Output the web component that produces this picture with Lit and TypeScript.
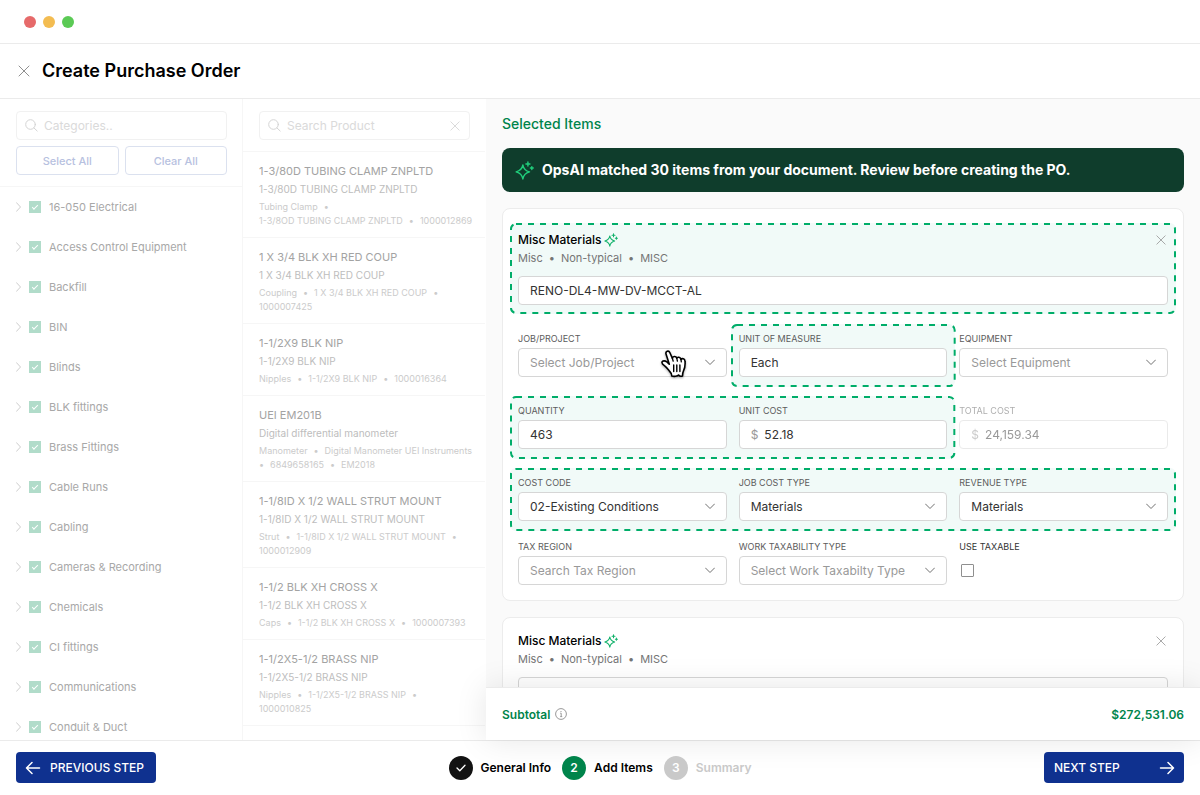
import { LitElement, html, css, nothing } from "lit";
import { customElement, property } from "lit/decorators.js";

const CATEGORIES = [
  "16-050 Electrical", "Access Control Equipment", "Backfill", "BIN", "Blinds", "BLK fittings",
  "Brass Fittings", "Cable Runs", "Cabling", "Cameras & Recording", "Chemicals", "CI fittings",
  "Communications", "Conduit & Duct",
];

interface Product { name: string; desc: string; lines: string[][]; }

const PRODUCTS: Product[] = [
  { name: "1-3/80D TUBING CLAMP ZNPLTD", desc: "1-3/80D TUBING CLAMP ZNPLTD", lines: [["Tubing Clamp", ""], ["1-3/8OD TUBING CLAMP ZNPLTD", "1000012869"]] },
  { name: "1 X 3/4 BLK XH RED COUP", desc: "1 X 3/4 BLK XH RED COUP", lines: [["Coupling", "1 X 3/4 BLK XH RED COUP", ""], ["1000007425"]] },
  { name: "1-1/2X9 BLK NIP", desc: "1-1/2X9 BLK NIP", lines: [["Nipples", "1-1/2X9 BLK NIP", "1000016364"]] },
  { name: "UEI EM201B", desc: "Digital differential manometer", lines: [["Manometer", "Digital Manometer UEI Instruments"], ["", "6849658165", "EM2018"]] },
  { name: "1-1/8ID X 1/2 WALL STRUT MOUNT", desc: "1-1/8ID X 1/2 WALL STRUT MOUNT", lines: [["Strut", "1-1/8ID X 1/2 WALL STRUT MOUNT", ""], ["1000012909"]] },
  { name: "1-1/2 BLK XH CROSS X", desc: "1-1/2 BLK XH CROSS X", lines: [["Caps", "1-1/2 BLK XH CROSS X", "1000007393"]] },
  { name: "1-1/2X5-1/2 BRASS NIP", desc: "1-1/2X5-1/2 BRASS NIP", lines: [["Nipples", "1-1/2X5-1/2 BRASS NIP", ""], ["1000010825"]] },
];

const base = css`
  *, *::before, *::after { box-sizing: border-box; }
  button, input, select { font: inherit; color: inherit; margin: 0; }
  button { cursor: pointer; }
  h1, h2, h3, p, ul { margin: 0; padding: 0; font-weight: inherit; font-size: inherit; }
  ul { list-style: none; }
  svg { display: block; flex: none; }
  .iconbtn { border: 0; background: none; padding: 0; display: block; }
`;

const cross = (size: number) => html`<svg width=${size} height=${size} viewBox="0 0 12 12" fill="none" stroke="currentColor" stroke-width="1" stroke-linecap="round"><path d="M1 1 11 11M11 1 1 11" /></svg>`;
const magnifier = html`<svg width="13" height="13" viewBox="0 0 13 13" fill="none" stroke="currentColor" stroke-width="1" stroke-linecap="round"><circle cx="5.5" cy="5.5" r="4.8" /><path d="M9 9 12.2 12" /></svg>`;
const sparkle = (size: number, color: string) => html`<svg width=${size} height=${size} viewBox="0 0 20 20" fill="none" stroke=${color} stroke-width="1.5" stroke-linecap="round" stroke-linejoin="round">
  <path d="M8.3 4.2Q9.2 9.9 15.3 11.4Q9.2 12.9 8.3 18.9Q7.3 12.9 1.2 11.4Q7.3 9.9 8.3 4.2Z" />
  <path d="M13.6 1V5.2M11.5 3.1H15.7M17.7 5.9V8.9M16.2 7.4H19.2" />
</svg>`;
const arrow = (left: boolean) => html`<svg width="16" height="14" viewBox="0 0 16 14" fill="none" stroke="currentColor" stroke-width="1.5" stroke-linecap="round" stroke-linejoin="round"><path d=${left ? "M7 1.5 1.5 7 7 12.5M1.5 7H14.5" : "M9 1.5 14.5 7 9 12.5M14.5 7H1.5"} /></svg>`;

@customElement("po-field")
class PoField extends LitElement {
  @property() label = "";
  @property() value = "";
  @property() kind: "text" | "select" = "text";
  @property() prefix = "";
  @property({ type: Boolean }) hint = false;
  @property({ type: Boolean }) muted = false;

  static styles = [base, css`
    :host { display: block; min-width: 0; }
    .label { display: block; font-size: 9px; line-height: 14px; color: #5c5c5c; margin-bottom: 2px; white-space: nowrap; }
    .box { display: flex; align-items: center; height: 29px; border: 1px solid #d6d6d6; border-radius: 4px; background: #fff; position: relative; color: #333; font-size: 12px; }
    .control { flex: 1; width: 100%; min-width: 0; height: 27px; border: 0; background: none; outline: none; padding: 0 11px; appearance: none; }
    .hint .control { color: #999; }
    .sign { color: #999; padding-left: 11px; }
    .sign + .control { padding-left: 6px; }
    .chev { position: absolute; right: 11px; top: 10px; pointer-events: none; color: #707070; }
    .muted { opacity: 0.5; }
  `];

  render() {
    return html`<div class="${this.hint ? "hint" : ""} ${this.muted ? "muted" : ""}">
      ${this.label ? html`<label class="label" for="control">${this.label}</label>` : nothing}
      <div class="box">
        ${this.prefix ? html`<span class="sign">${this.prefix}</span>` : nothing}
        ${this.kind === "select"
          ? html`<select class="control" id="control"><option>${this.value}</option></select>
              <svg class="chev" width="10" height="7" viewBox="0 0 10 7" fill="none" stroke="currentColor" stroke-linecap="round" stroke-linejoin="round"><path d="M.5 1 5 5.5 9.5 1" /></svg>`
          : html`<input class="control" id="control" type="text" aria-label=${this.label || "Description"} .value=${this.value} ?disabled=${this.muted} />`}
      </div>
    </div>`;
  }
}

@customElement("po-match")
class PoMatch extends LitElement {
  static styles = css`
    :host { display: block; position: relative; margin: 0 -8px; padding: 8px 8px 10px; border-radius: 6px; background: #f1faf8; }
    .frame { position: absolute; inset: 1px; width: calc(100% - 2px); height: calc(100% - 2px); overflow: visible; }
    .outline { fill: none; stroke: #00ad69; stroke-width: 2; stroke-dasharray: 6 6; }
    .body { position: relative; }
  `;
  render() {
    return html`<svg class="frame" aria-hidden="true"><rect class="outline" x="0" y="0" width="100%" height="100%" rx="5" /></svg>
      <div class="body"><slot></slot></div>`;
  }
}

@customElement("po-item-head")
class PoItemHead extends LitElement {
  static styles = [base, css`
    :host { display: block; }
    .top { display: flex; align-items: center; gap: 3px; height: 17px; }
    .name { font-size: 12px; line-height: 16px; font-weight: 500; color: #000; }
    .iconbtn { margin-left: auto; margin-right: 2px; color: #999; }
    .tags { display: flex; gap: 6px; font-size: 11px; line-height: 16px; color: #757575; margin: 2px 0 10px; }
  `];
  render() {
    return html`<div class="top"><h3 class="name">Misc Materials</h3>${sparkle(14, "#12b26b")}
        <button class="iconbtn" aria-label="Remove item">${cross(10)}</button></div>
      <p class="tags"><span>Misc</span><span>•</span><span>Non-typical</span><span>•</span><span>MISC</span></p>
      <po-field value="RENO-DL4-MW-DV-MCCT-AL"></po-field>`;
  }
}

@customElement("app-root")
class AppRoot extends LitElement {
  static styles = [base, css`
    :host { display: flex; flex-direction: column; height: 100vh; overflow: hidden; background: #fff; font-family: Inter, "Liberation Sans", sans-serif; color: #000; font-size: 12px; }
    .chrome { display: flex; align-items: center; gap: 7px; height: 44px; padding-left: 24px; border-bottom: 1px solid #ebebeb; flex: none; }
    .dot { width: 12px; height: 12px; border-radius: 50%; }
    .red { background: #e66a6a; } .amber { background: #f3bc51; } .green { background: #5bca55; }
    .title { display: flex; align-items: center; gap: 12px; height: 55px; padding-left: 18px; border-bottom: 1px solid #ebebeb; flex: none; }
    .title .iconbtn { color: #8f8f8f; }
    .heading { font-size: 18px; line-height: 24px; font-weight: 600; }
    .main { flex: 1; min-height: 0; display: grid; grid-template-columns: 243px 243px minmax(0, 1fr); }
    .col { min-width: 0; min-height: 0; overflow: hidden; border-right: 1px solid #f6f6f6; }
    .col.last { border-right-color: #fff; }
    .tools { padding: 12px 15px 11px 16px; border-bottom: 1px solid #f6f6f6; display: grid; grid-template-columns: minmax(0, 1fr); gap: 6px; }
    .search { display: flex; align-items: center; gap: 6px; height: 29px; padding: 0 9px 0 8px; border: 1px solid #f1f1f1; border-radius: 4px; color: #d4d4d4; }
    .query { flex: 1; min-width: 0; border: 0; outline: 0; padding: 0; background: none; }
    .query::placeholder { color: #dadada; opacity: 1; }
    .pair { display: grid; grid-template-columns: repeat(2, minmax(0, 1fr)); gap: 6px; }
    .pick { height: 29px; border: 1px solid #dbe1ef; border-radius: 4px; background: #fff; color: #b7c1e0; font-size: 11px; font-weight: 500; padding: 0; }
    .cat { display: flex; align-items: center; height: 40px; padding-left: 16px; color: #a8a8a8; font-size: 11px; }
    .cat .iconbtn { color: #cdcdcd; margin-right: 8px; }
    .tick { appearance: none; width: 12px; height: 12px; margin: 0; background: #b1dcca; display: grid; place-items: center; }
    .tick::after { content: ""; width: 6px; height: 3px; border-left: 1px solid #fff; border-bottom: 1px solid #fff; transform: translateY(-1px) rotate(-45deg); }
    .cat label { display: flex; align-items: center; gap: 8px; line-height: 16px; }
    .prod { padding: 10px 0 9px 16px; border-bottom: 1px solid #f6f6f6; color: #cbcbcb; white-space: nowrap; }
    .pname { font-size: 11px; line-height: 18px; color: #a3a3a3; }
    .pdesc { font-size: 10px; line-height: 16px; color: #bdbdbd; margin: 1px 0 3px; }
    .pmeta { display: flex; gap: 6px; font-size: 9px; line-height: 14px; }
    .right { display: flex; flex-direction: column; min-height: 0; background: #fafafa; }
    .items { flex: 1; min-height: 0; overflow: hidden; padding: 15px 16px 0; }
    .section { font-size: 14px; line-height: 20px; font-weight: 500; color: #00844b; }
    .banner { margin-top: 14px; height: 44px; border-radius: 8px; background: #0f3d2c; color: #fff; display: flex; align-items: center; gap: 8px; padding-left: 13px; font-size: 14px; line-height: 18px; font-weight: 700; }
    .card { margin-top: 16px; border: 1px solid #ececec; border-radius: 8px; background: #fff; padding: 14px 15px 15px; }
    .grid { display: grid; grid-template-columns: repeat(3, minmax(0, 1fr)); column-gap: 12px; row-gap: 9px; margin-top: 10px; }
    .grid.taxes { margin-top: 9px; }
    .head { padding-bottom: 9px; }
    .two { grid-column: span 2; }
    .full { grid-column: span 3; }
    .pad { padding: 8px 0 10px; }
    .inner { display: grid; gap: 12px; }
    .inner.c2 { grid-template-columns: repeat(2, minmax(0, 1fr)); }
    .inner.c3 { grid-template-columns: repeat(3, minmax(0, 1fr)); }
    .taxable { display: block; font-size: 9px; line-height: 14px; color: #333; }
    .square { appearance: none; display: block; width: 13px; height: 13px; margin: 10px 0 0 2px; border: 1px solid #8f8f8f; border-radius: 1px; background: #fff; }
    .subtotal { flex: none; position: relative; display: flex; align-items: center; gap: 5px; height: 53px; padding: 0 16px; background: #fff; border-top: 1px solid #ebebeb; color: #00844b; font-weight: 600; box-shadow: 0 0 32px rgba(0, 0, 0, 0.1); }
    .sum { margin-left: auto; }
    .footer { flex: none; display: grid; grid-template-columns: 1fr auto 1fr; align-items: center; padding: 11px 16px 12px; border-top: 1px solid #ebebeb; background: #fff; }
    .step { display: flex; align-items: center; gap: 9px; width: 140px; height: 31px; padding: 0 9px; border: 0; border-radius: 4px; background: #0f318f; color: #fff; font-size: 12px; font-weight: 500; position: relative; }
    .step.next { justify-self: end; justify-content: space-between; padding-left: 10px; }
    .steps { display: flex; gap: 11px; font-size: 12px; font-weight: 600; position: relative; }
    .stage { display: flex; align-items: center; gap: 8px; }
    .num { display: grid; place-items: center; width: 24px; height: 24px; border-radius: 50%; background: #121212; color: #fff; }
    .num.on { background: #00844b; }
    .num.off { background: #c9c9c9; }
    .stage.dim { color: #c9c9c9; }
    .job { position: relative; }
    .pointer { position: absolute; left: 142px; top: 25px; pointer-events: none; overflow: visible; filter: drop-shadow(0 1px 1px rgba(0, 0, 0, 0.35)); }
  `];

  private product(p: Product) {
    return html`<li class="prod"><h3 class="pname">${p.name}</h3><p class="pdesc">${p.desc}</p>
      ${p.lines.map((line) => html`<p class="pmeta">${line.map((part, i) => html`${i ? html`<span>•</span>` : nothing}${part ? html`<span>${part}</span>` : nothing}`)}</p>`)}</li>`;
  }

  render() {
    return html`
      <div class="chrome"><span class="dot red"></span><span class="dot amber"></span><span class="dot green"></span></div>
      <header class="title"><button class="iconbtn" aria-label="Close">${cross(12)}</button><h1 class="heading">Create Purchase Order</h1></header>
      <div class="main">
        <section class="col">
          <div class="tools">
            <div class="search">${magnifier}<input class="query" aria-label="Categories" placeholder="Categories.." /></div>
            <div class="pair"><button class="pick">Select All</button><button class="pick">Clear All</button></div>
          </div>
          <ul>${CATEGORIES.map((c) => html`<li class="cat">
            <button class="iconbtn" aria-label="Expand ${c}"><svg width="5" height="10" viewBox="0 0 5 10" fill="none" stroke="currentColor" stroke-linecap="round" stroke-linejoin="round"><path d="M.5 .7 4.5 5 .5 9.3" /></svg></button>
            <label><input class="tick" type="checkbox" checked /><span>${c}</span></label></li>`)}</ul>
        </section>
        <section class="col last">
          <div class="tools"><div class="search">${magnifier}<input class="query" aria-label="Search Product" placeholder="Search Product" /><button class="iconbtn" aria-label="Clear search">${cross(10)}</button></div></div>
          <ul>${PRODUCTS.map((p) => this.product(p))}</ul>
        </section>
        <section class="right">
          <div class="items">
            <h2 class="section">Selected Items</h2>
            <div class="banner">${sparkle(19, "#20cf7c")}<span>OpsAI matched 30 items from your document. Review before creating the PO.</span></div>
            <article class="card">
              <po-match class="head"><po-item-head></po-item-head></po-match>
              <div class="grid">
                <div class="pad job"><po-field label="JOB/PROJECT" kind="select" hint value="Select Job/Project"></po-field>
                  <svg class="pointer" width="28" height="30" viewBox="0 0 28 30" stroke="#000" stroke-linecap="round" stroke-linejoin="round">
                    <path fill="#fff" stroke-width="1.6" d="M9.3 15.2 6.1 5.2C5.1 2.3 8.7 .9 9.9 3.7L12.4 9.4C12.5 7 16.1 6.7 16.8 9.3C17.4 7.6 20.5 7.9 21 10.5C22 9 24.8 9.6 25 12.2C25.4 16.2 25 19 23.5 21.8C22.8 23.2 22.5 24.4 22.5 27C20.8 27.5 19.4 27.2 18.6 26C17.8 27.4 13.8 27.6 11.8 27C11.8 24.6 10.8 23.4 9.3 21.9C7.8 20.3 6.8 18.5 5.2 17.3C3.6 16.1 1.5 14.8 2 13C2.6 11.3 5.3 11.7 6.8 12.9C7.8 13.7 8.5 14.5 9.3 15.2Z" />
                    <path fill="none" stroke-width="1.3" d="M12.4 9.4 13.2 12.2M16.8 9.3 17.4 12.2M21 10.5 21.3 12.8" />
                    <path fill="none" stroke-width="1.4" d="M13.7 16V22.5M16.8 16V22.5M19.9 16V22.5" />
                  </svg></div>
                <po-match><po-field label="UNIT OF MEASURE" value="Each"></po-field></po-match>
                <div class="pad"><po-field label="EQUIPMENT" kind="select" hint value="Select Equipment"></po-field></div>
                <po-match class="two"><div class="inner c2"><po-field label="QUANTITY" value="463"></po-field><po-field label="UNIT COST" prefix="$" value="52.18"></po-field></div></po-match>
                <div class="pad"><po-field label="TOTAL COST" prefix="$" value="24,159.34" muted></po-field></div>
                <po-match class="full"><div class="inner c3"><po-field label="COST CODE" kind="select" value="02-Existing Conditions"></po-field><po-field label="JOB COST TYPE" kind="select" value="Materials"></po-field><po-field label="REVENUE TYPE" kind="select" value="Materials"></po-field></div></po-match>
              </div>
              <div class="grid taxes">
                <po-field label="TAX REGION" kind="select" hint value="Search Tax Region"></po-field>
                <po-field label="WORK TAXABILITY TYPE" kind="select" hint value="Select Work Taxabilty Type"></po-field>
                <div><label class="taxable" for="taxable">USE TAXABLE</label><input class="square" id="taxable" type="checkbox" /></div>
              </div>
            </article>
            <article class="card"><po-item-head></po-item-head></article>
          </div>
          <div class="subtotal"><span>Subtotal</span><svg width="12" height="12" viewBox="0 0 12 12" fill="none" stroke="#999"><circle cx="6" cy="6" r="5.4" /><path d="M5.2 5.2H6.2V8.6M5.2 8.6H7.2M6 3V4" /></svg><span class="sum">$272,531.06</span></div>
        </section>
      </div>
      <footer class="footer">
        <button class="step">${arrow(true)}<span>PREVIOUS STEP</span></button>
        <div class="steps">
          <div class="stage"><span class="num"><svg width="10" height="8" viewBox="0 0 10 8" fill="none" stroke="#fff" stroke-width="1.3" stroke-linecap="round" stroke-linejoin="round"><path d="M1 4 3.8 6.8 9 1.2" /></svg></span>General Info</div>
          <div class="stage"><span class="num on">2</span>Add Items</div>
          <div class="stage dim"><span class="num off">3</span>Summary</div>
        </div>
        <button class="step next"><span>NEXT STEP</span>${arrow(false)}</button>
      </footer>`;
  }
}
